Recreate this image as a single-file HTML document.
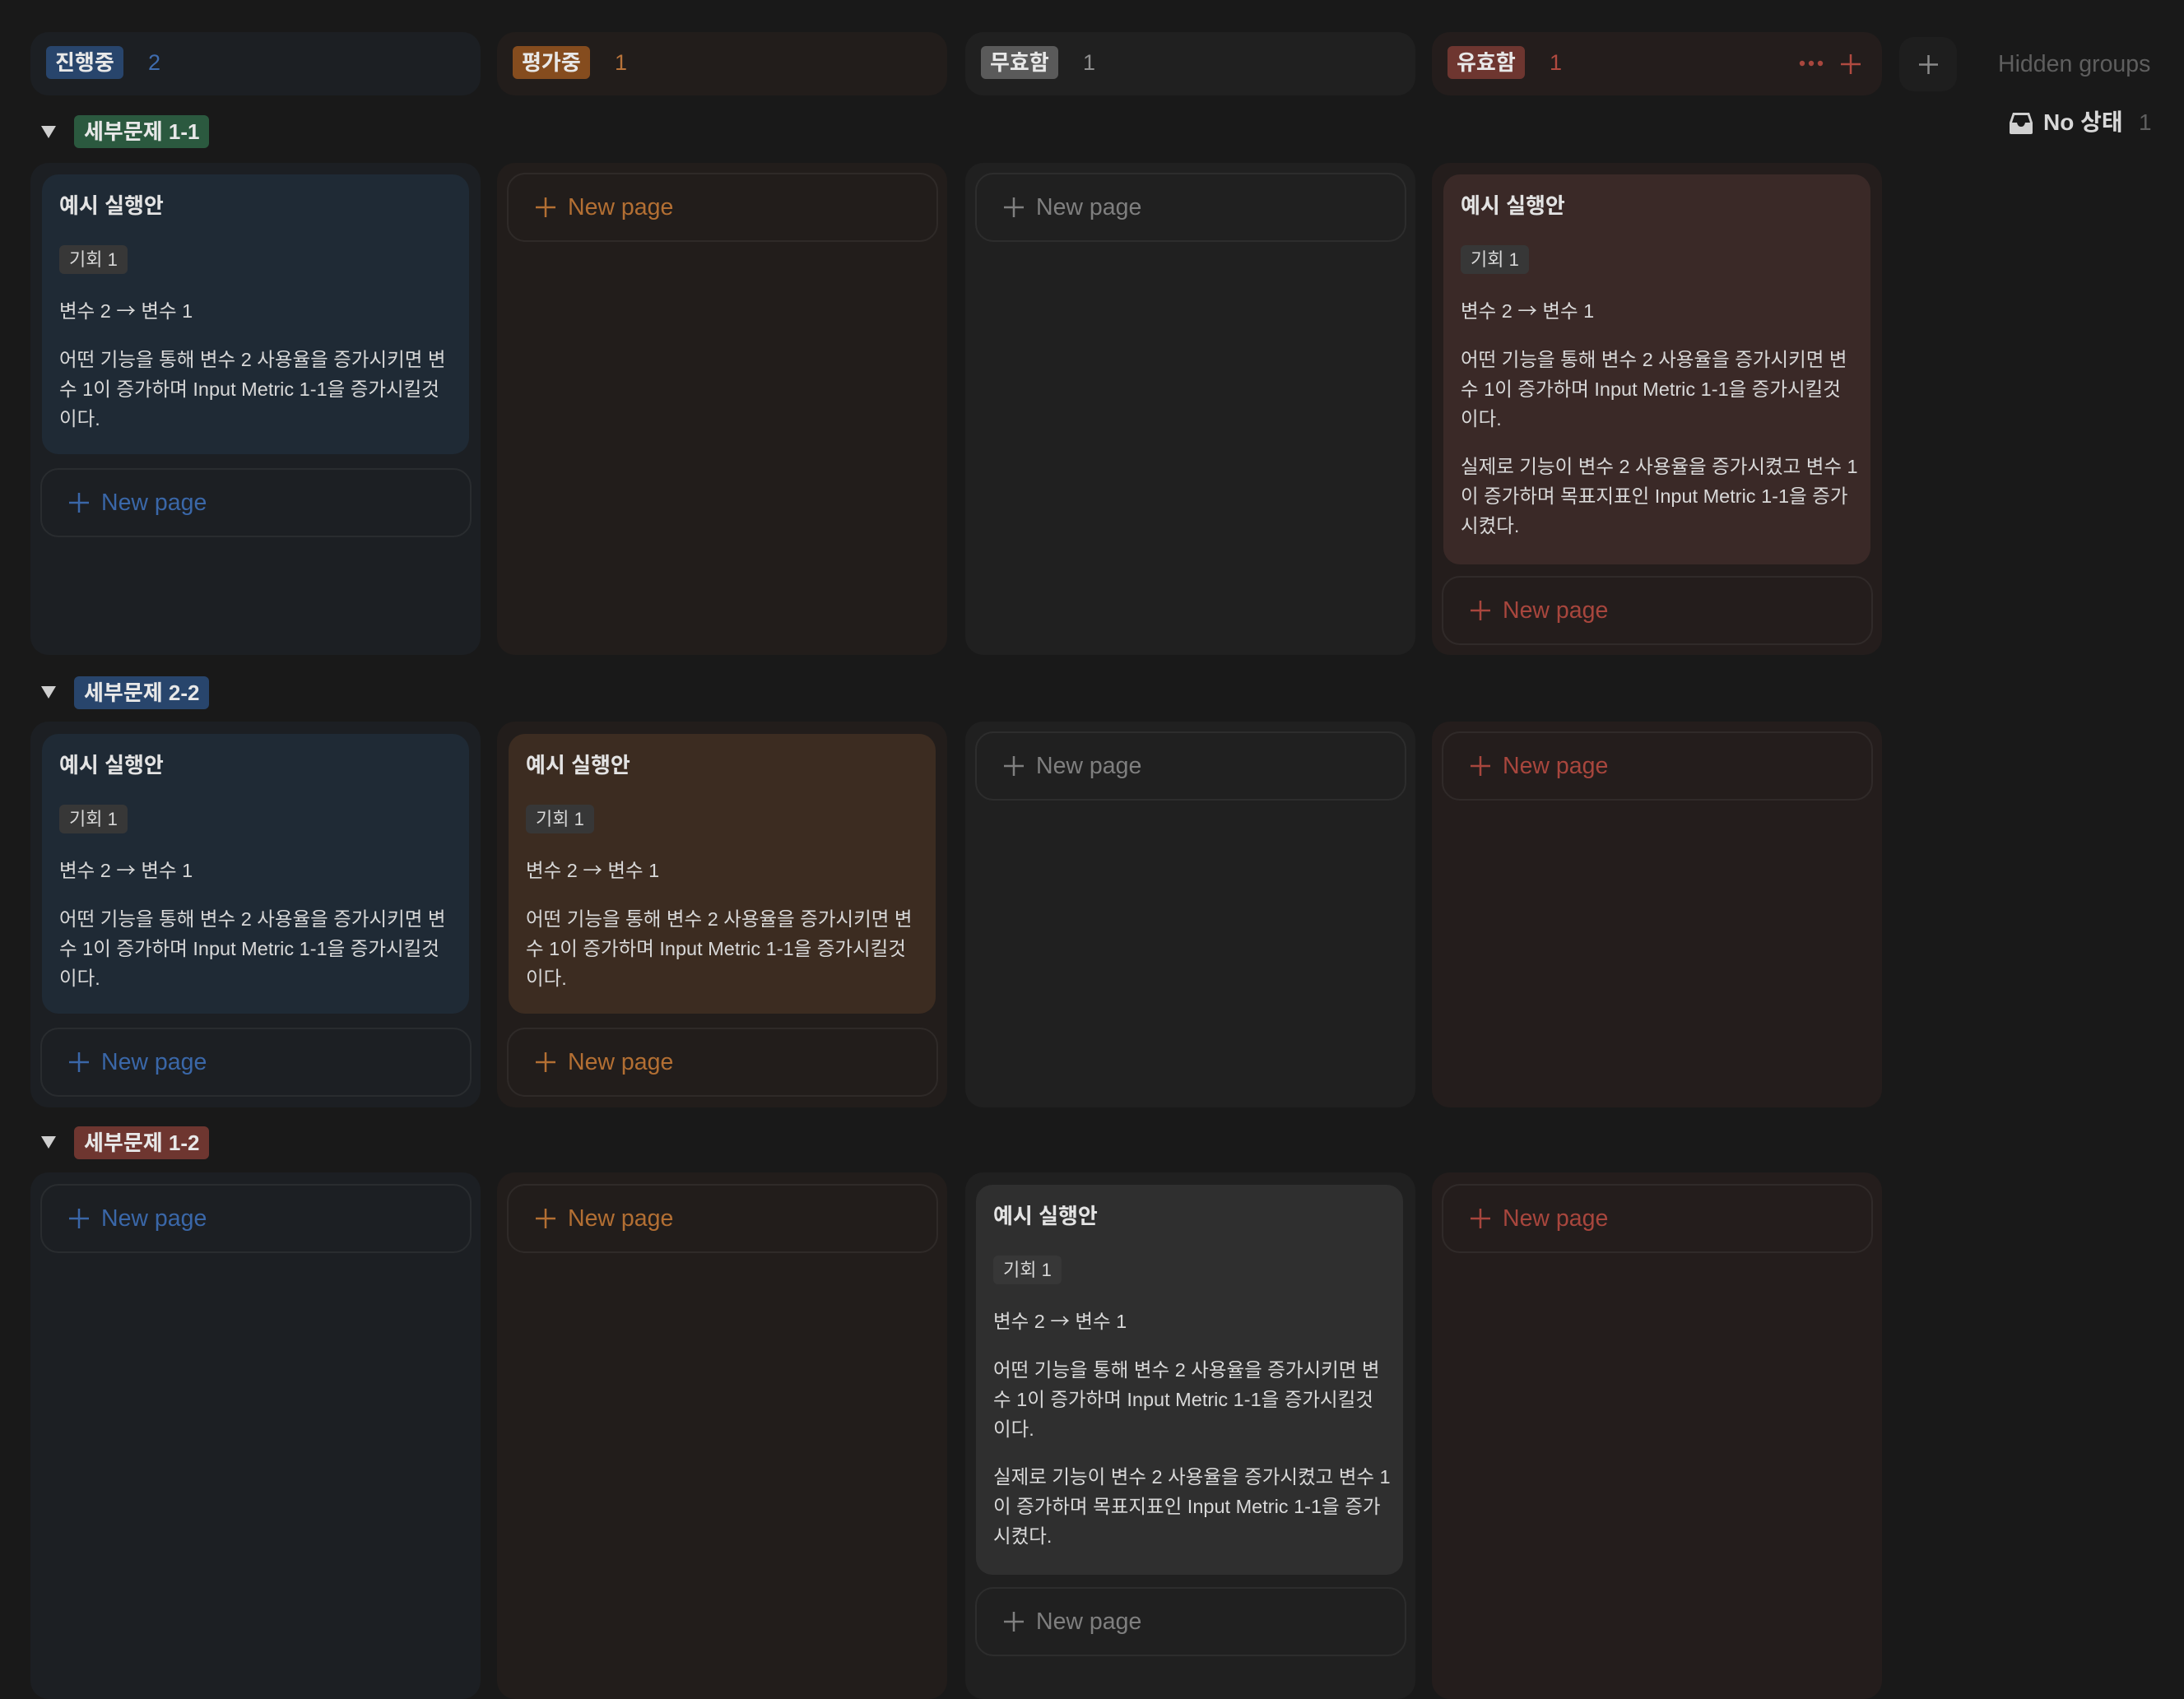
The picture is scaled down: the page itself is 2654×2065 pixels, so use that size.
<!DOCTYPE html>
<html><head><meta charset="utf-8">
<style>
*{margin:0;padding:0;box-sizing:border-box}
body{width:2654px;height:2012px;background:#191919;overflow:hidden;position:relative;font-family:"Liberation Sans","Noto Sans CJK KR",sans-serif;color:#d4d4d4}
.a{position:absolute}
.col{position:absolute;width:547px;border-radius:22px}
.hdr{position:absolute;top:39px;height:77px;width:547px;border-radius:22px}
.pill{position:absolute;height:40px;line-height:40px;padding:0 11px;border-radius:6px;font-size:26px;font-weight:bold;color:#e8e8e8}
.cnt{position:absolute;font-size:27px;line-height:40px}
.card{position:absolute;width:519px;border-radius:20px}
.card .t{position:absolute;left:21px;top:20px;font-size:26px;font-weight:bold;color:#e3e3e3;line-height:36px}
.card .tag{position:absolute;left:21px;top:86px;height:35px;line-height:35px;padding:0 12px;background:#373737;border-radius:6px;font-size:22px;color:#d8d8d8}
.card .v{position:absolute;left:21px;top:146px;font-size:23.5px;line-height:36px;color:#d8d8d8}
.card .v b{font-weight:normal;font-family:"Noto Sans CJK KR",sans-serif}
.card .p{position:absolute;left:21px;font-size:23.5px;line-height:36px;color:#d8d8d8;white-space:nowrap}
.np{position:absolute;width:524px;height:84px;border:2px solid rgba(255,255,255,0.06);border-radius:22px}
.np svg{position:absolute;left:33px;top:28px}
.np span{position:absolute;left:72px;top:0;line-height:80px;font-size:28.5px}
.gp{position:absolute;left:90px;height:40px;line-height:40px;padding:0 12px;border-radius:6px;font-size:26px;font-weight:bold;color:#e8e8e8}
.tri{position:absolute;left:50px;width:0;height:0;border-left:9px solid transparent;border-right:9px solid transparent;border-top:15px solid #cfcfcf}
</style></head><body>

<div class="hdr" style="left:37px;background:#1c1f23"><div class="pill" style="left:19px;top:17px;background:#28456c">진행중</div><div class="cnt" style="left:143px;top:17px;color:#3f6cae">2</div></div>
<div class="hdr" style="left:604px;background:#221d1b"><div class="pill" style="left:19px;top:17px;background:#854c1e">평가중</div><div class="cnt" style="left:143px;top:17px;color:#b8733a">1</div></div>
<div class="hdr" style="left:1173px;background:#202020"><div class="pill" style="left:19px;top:17px;background:#5a5a5a">무효함</div><div class="cnt" style="left:143px;top:17px;color:#8f8f8f">1</div></div>
<div class="hdr" style="left:1740px;background:#241d1c"><div class="pill" style="left:19px;top:17px;background:#6e3630">유효함</div><div class="cnt" style="left:143px;top:17px;color:#b04a40">1</div>
<svg class="a" style="left:446px;top:32px" width="30" height="12"><circle cx="4" cy="6" r="3.2" fill="#a8463d"/><circle cx="15" cy="6" r="3.2" fill="#a8463d"/><circle cx="26" cy="6" r="3.2" fill="#a8463d"/></svg>
<svg class="a" style="left:496px;top:26px" width="26" height="26"><path d="M13 1V25M1 13H25" stroke="#b04a40" stroke-width="2.5"/></svg>
</div>
<div class="a" style="left:2308px;top:45px;width:70px;height:66px;border-radius:18px;background:#1e1e1e"><svg class="a" style="left:23px;top:21px" width="25" height="25"><path d="M12.5 1V24M1 12.5H24" stroke="#8a8a8a" stroke-width="2.5"/></svg></div>
<div class="a" style="left:2428px;top:60px;font-size:28.5px;line-height:36px;color:#5e5e5e">Hidden groups</div>
<svg class="a" style="left:2441px;top:135px" width="30" height="29" viewBox="0 0 30 29"><path d="M5 2H25L29 14V26Q29 28 27 28H3Q1 28 1 26V14Z" fill="#d0d0d0"/><path d="M4 14H10Q11 19 15 19Q19 19 20 14H26L23 5H7Z" fill="#191919"/></svg>
<div class="a" style="left:2483px;top:131px;font-size:28px;line-height:36px;font-weight:bold;color:#d8d8d8">No 상태</div>
<div class="a" style="left:2599px;top:131px;font-size:28px;line-height:36px;color:#5e5e5e">1</div>

<div class="tri" style="top:153px"></div>
<div class="gp" style="top:140px;background:#2b593f">세부문제 1-1</div>
<div class="col" style="left:37px;top:198px;height:598px;background:#1c1f23"></div>
<div class="col" style="left:604px;top:198px;height:598px;background:#221d1b"></div>
<div class="col" style="left:1173px;top:198px;height:598px;background:#202020"></div>
<div class="col" style="left:1740px;top:198px;height:598px;background:#241d1c"></div>

<div class="card" style="left:51px;top:212px;height:340px;background:#1f2a35"><div class="t">예시 실행안</div><div class="tag">기회 1</div><div class="v">변수 2 <b>→</b> 변수 1</div><div class="p" style="top:207px">어떤 기능을 통해 변수 2 사용율을 증가시키면 변<br>수 1이 증가하며 Input Metric 1-1을 증가시킬것<br>이다.</div></div>
<div class="np" style="left:49px;top:569px"><svg width="24" height="24"><path d="M12 0V24M0 12H24" stroke="#3a67a8" stroke-width="2.5"/></svg><span style="color:#3a67a8">New page</span></div>
<div class="np" style="left:616px;top:210px"><svg width="24" height="24"><path d="M12 0V24M0 12H24" stroke="#b36f33" stroke-width="2.5"/></svg><span style="color:#b36f33">New page</span></div>
<div class="np" style="left:1185px;top:210px"><svg width="24" height="24"><path d="M12 0V24M0 12H24" stroke="#7f7f7f" stroke-width="2.5"/></svg><span style="color:#7f7f7f">New page</span></div>
<div class="card" style="left:1754px;top:212px;height:474px;background:#3a2927"><div class="t">예시 실행안</div><div class="tag">기회 1</div><div class="v">변수 2 <b>→</b> 변수 1</div><div class="p" style="top:207px">어떤 기능을 통해 변수 2 사용율을 증가시키면 변<br>수 1이 증가하며 Input Metric 1-1을 증가시킬것<br>이다.</div><div class="p" style="top:337px">실제로 기능이 변수 2 사용율을 증가시켰고 변수 1<br>이 증가하며 목표지표인 Input Metric 1-1을 증가<br>시켰다.</div></div>
<div class="np" style="left:1752px;top:700px"><svg width="24" height="24"><path d="M12 0V24M0 12H24" stroke="#a8463d" stroke-width="2.5"/></svg><span style="color:#a8463d">New page</span></div>

<div class="tri" style="top:834px"></div>
<div class="gp" style="top:822px;background:#28456c">세부문제 2-2</div>
<div class="col" style="left:37px;top:877px;height:469px;background:#1c1f23"></div>
<div class="col" style="left:604px;top:877px;height:469px;background:#221d1b"></div>
<div class="col" style="left:1173px;top:877px;height:469px;background:#202020"></div>
<div class="col" style="left:1740px;top:877px;height:469px;background:#241d1c"></div>

<div class="card" style="left:51px;top:892px;height:340px;background:#1f2a35"><div class="t">예시 실행안</div><div class="tag">기회 1</div><div class="v">변수 2 <b>→</b> 변수 1</div><div class="p" style="top:207px">어떤 기능을 통해 변수 2 사용율을 증가시키면 변<br>수 1이 증가하며 Input Metric 1-1을 증가시킬것<br>이다.</div></div>
<div class="np" style="left:49px;top:1249px"><svg width="24" height="24"><path d="M12 0V24M0 12H24" stroke="#3a67a8" stroke-width="2.5"/></svg><span style="color:#3a67a8">New page</span></div>
<div class="card" style="left:618px;top:892px;height:340px;background:#3c2c21"><div class="t">예시 실행안</div><div class="tag">기회 1</div><div class="v">변수 2 <b>→</b> 변수 1</div><div class="p" style="top:207px">어떤 기능을 통해 변수 2 사용율을 증가시키면 변<br>수 1이 증가하며 Input Metric 1-1을 증가시킬것<br>이다.</div></div>
<div class="np" style="left:616px;top:1249px"><svg width="24" height="24"><path d="M12 0V24M0 12H24" stroke="#b36f33" stroke-width="2.5"/></svg><span style="color:#b36f33">New page</span></div>
<div class="np" style="left:1185px;top:889px"><svg width="24" height="24"><path d="M12 0V24M0 12H24" stroke="#7f7f7f" stroke-width="2.5"/></svg><span style="color:#7f7f7f">New page</span></div>
<div class="np" style="left:1752px;top:889px"><svg width="24" height="24"><path d="M12 0V24M0 12H24" stroke="#a8463d" stroke-width="2.5"/></svg><span style="color:#a8463d">New page</span></div>

<div class="tri" style="top:1381px"></div>
<div class="gp" style="top:1369px;background:#6e3630">세부문제 1-2</div>
<div class="col" style="left:37px;top:1425px;height:640px;background:#1c1f23"></div>
<div class="col" style="left:604px;top:1425px;height:640px;background:#221d1b"></div>
<div class="col" style="left:1173px;top:1425px;height:640px;background:#202020"></div>
<div class="col" style="left:1740px;top:1425px;height:640px;background:#241d1c"></div>

<div class="np" style="left:49px;top:1439px"><svg width="24" height="24"><path d="M12 0V24M0 12H24" stroke="#3a67a8" stroke-width="2.5"/></svg><span style="color:#3a67a8">New page</span></div>
<div class="np" style="left:616px;top:1439px"><svg width="24" height="24"><path d="M12 0V24M0 12H24" stroke="#b36f33" stroke-width="2.5"/></svg><span style="color:#b36f33">New page</span></div>
<div class="card" style="left:1186px;top:1440px;height:474px;background:#2f2f2f"><div class="t">예시 실행안</div><div class="tag">기회 1</div><div class="v">변수 2 <b>→</b> 변수 1</div><div class="p" style="top:207px">어떤 기능을 통해 변수 2 사용율을 증가시키면 변<br>수 1이 증가하며 Input Metric 1-1을 증가시킬것<br>이다.</div><div class="p" style="top:337px">실제로 기능이 변수 2 사용율을 증가시켰고 변수 1<br>이 증가하며 목표지표인 Input Metric 1-1을 증가<br>시켰다.</div></div>
<div class="np" style="left:1185px;top:1929px"><svg width="24" height="24"><path d="M12 0V24M0 12H24" stroke="#7f7f7f" stroke-width="2.5"/></svg><span style="color:#7f7f7f">New page</span></div>
<div class="np" style="left:1752px;top:1439px"><svg width="24" height="24"><path d="M12 0V24M0 12H24" stroke="#a8463d" stroke-width="2.5"/></svg><span style="color:#a8463d">New page</span></div>

</body></html>
